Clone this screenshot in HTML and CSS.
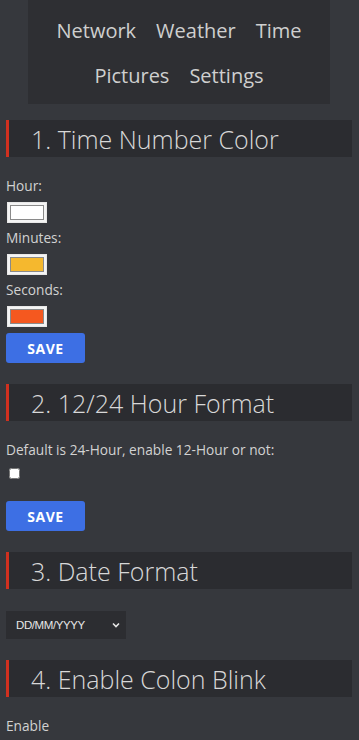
FILE: index.html
```html
<!DOCTYPE html>
<html lang="en">
<head>
    <meta charset="UTF-8">
    <meta name="viewport" content="width=device-width, initial-scale=1.0">
    <title>Clock Settings</title>
    <link rel="stylesheet" href="styles.css">
</head>
<body>
    <nav class="topnav">
        <a href="#">Network</a>
        <a href="#">Weather</a>
        <a href="#">Time</a>
        <a href="#">Pictures</a>
        <a href="#">Settings</a>
    </nav>

    <section class="block first">
        <h2>1. Time Number Color</h2>
        <label for="hourColor" class="top-label">Hour:</label>
        <input type="color" id="hourColor" value="#ffffff">
        <label for="minColor">Minutes:</label>
        <input type="color" id="minColor" value="#f5b82e">
        <label for="secColor">Seconds:</label>
        <input type="color" id="secColor" value="#f5581f">
        <button class="save">SAVE</button>
    </section>

    <section class="block">
        <h2>2. 12/24 Hour Format</h2>
        <label for="hour12">Default is 24-Hour, enable 12-Hour or not:</label>
        <input type="checkbox" id="hour12">
        <button class="save save-gap">SAVE</button>
    </section>

    <section class="block">
        <h2>3. Date Format</h2>
        <div class="select-wrap">
            <select id="dateFormat">
                <option>DD/MM/YYYY</option>
                <option>MM/DD/YYYY</option>
                <option>YYYY/MM/DD</option>
            </select>
            <svg class="chevron" width="8" height="6" viewBox="0 0 8 6">
                <path d="M1 1.5 L4 4.5 L7 1.5" fill="none" stroke="#e6e6e6" stroke-width="1.6"/>
            </svg>
        </div>
    </section>

    <section class="block">
        <h2>4. Enable Colon Blink</h2>
        <label for="blink">Enable</label>
    </section>
</body>
</html>
```

FILE: styles.css
```css
body {
    margin: 0;
    padding: 0 7px 0 6px;
    background: #36383d;
    color: #d2d2d2;
    font-family: 'Open Sans', 'Noto Sans', sans-serif;
    font-size: 13.7px;
}
.topnav {
    width: 302px;
    margin: 0 auto;
    padding: 8px 0 6px;
    background: #2e2f33;
    display: flex;
    flex-wrap: wrap;
    justify-content: center;
    box-sizing: border-box;
}
.topnav a {
    color: #cfcfcf;
    text-decoration: none;
    font-size: 20px;
    line-height: 45px;
    padding: 0 10px;
}
.block {
    margin-top: 21px;
}
.block.first {
    margin-top: 16px;
}
.block h2 {
    margin: 0 0 20px;
    height: 37px;
    line-height: 39px;
    background: #2b2c30;
    border-left: 3px solid #d0301f;
    padding-left: 22px;
    font-weight: 300;
    font-size: 25px;
    color: #d8d8d8;
}
.block label {
    display: block;
    line-height: 18px;
}
.block .top-label {
    margin-top: 2px;
}
input[type="color"] {
    display: block;
    width: 40px;
    height: 21px;
    margin: 7px 0 6px 1px;
    padding: 2px;
    border: 1px solid #e8e8e8;
    background: #f4f4f4;
    box-sizing: border-box;
}
input[type="color"]::-webkit-color-swatch-wrapper {
    padding: 0;
}
input[type="color"]::-webkit-color-swatch {
    border: 1px solid #8a8a8a;
}
input[type="checkbox"] {
    display: block;
    width: 11px;
    height: 11px;
    margin: 9px 0 0 3px;
}
.save {
    display: block;
    margin-top: 6px;
    width: 79px;
    height: 30px;
    border: none;
    border-radius: 3px;
    background: #3d6fe4;
    color: #fff;
    font-family: 'Open Sans', sans-serif;
    font-weight: bold;
    font-size: 14px;
    letter-spacing: 0.5px;
}
.save-gap {
    margin-top: 22px;
}
.select-wrap {
    position: relative;
    width: 120px;
    margin-top: 22px;
}
.select-wrap select {
    appearance: none;
    -webkit-appearance: none;
    display: block;
    width: 120px;
    height: 28px;
    border: none;
    background: #2c2d31;
    color: #e6e6e6;
    font-family: 'Liberation Sans', Arial, sans-serif;
    font-size: 11.5px;
    letter-spacing: -0.4px;
    padding: 0 10px;
}
.chevron {
    position: absolute;
    right: 6px;
    top: 11px;
    pointer-events: none;
}
```
